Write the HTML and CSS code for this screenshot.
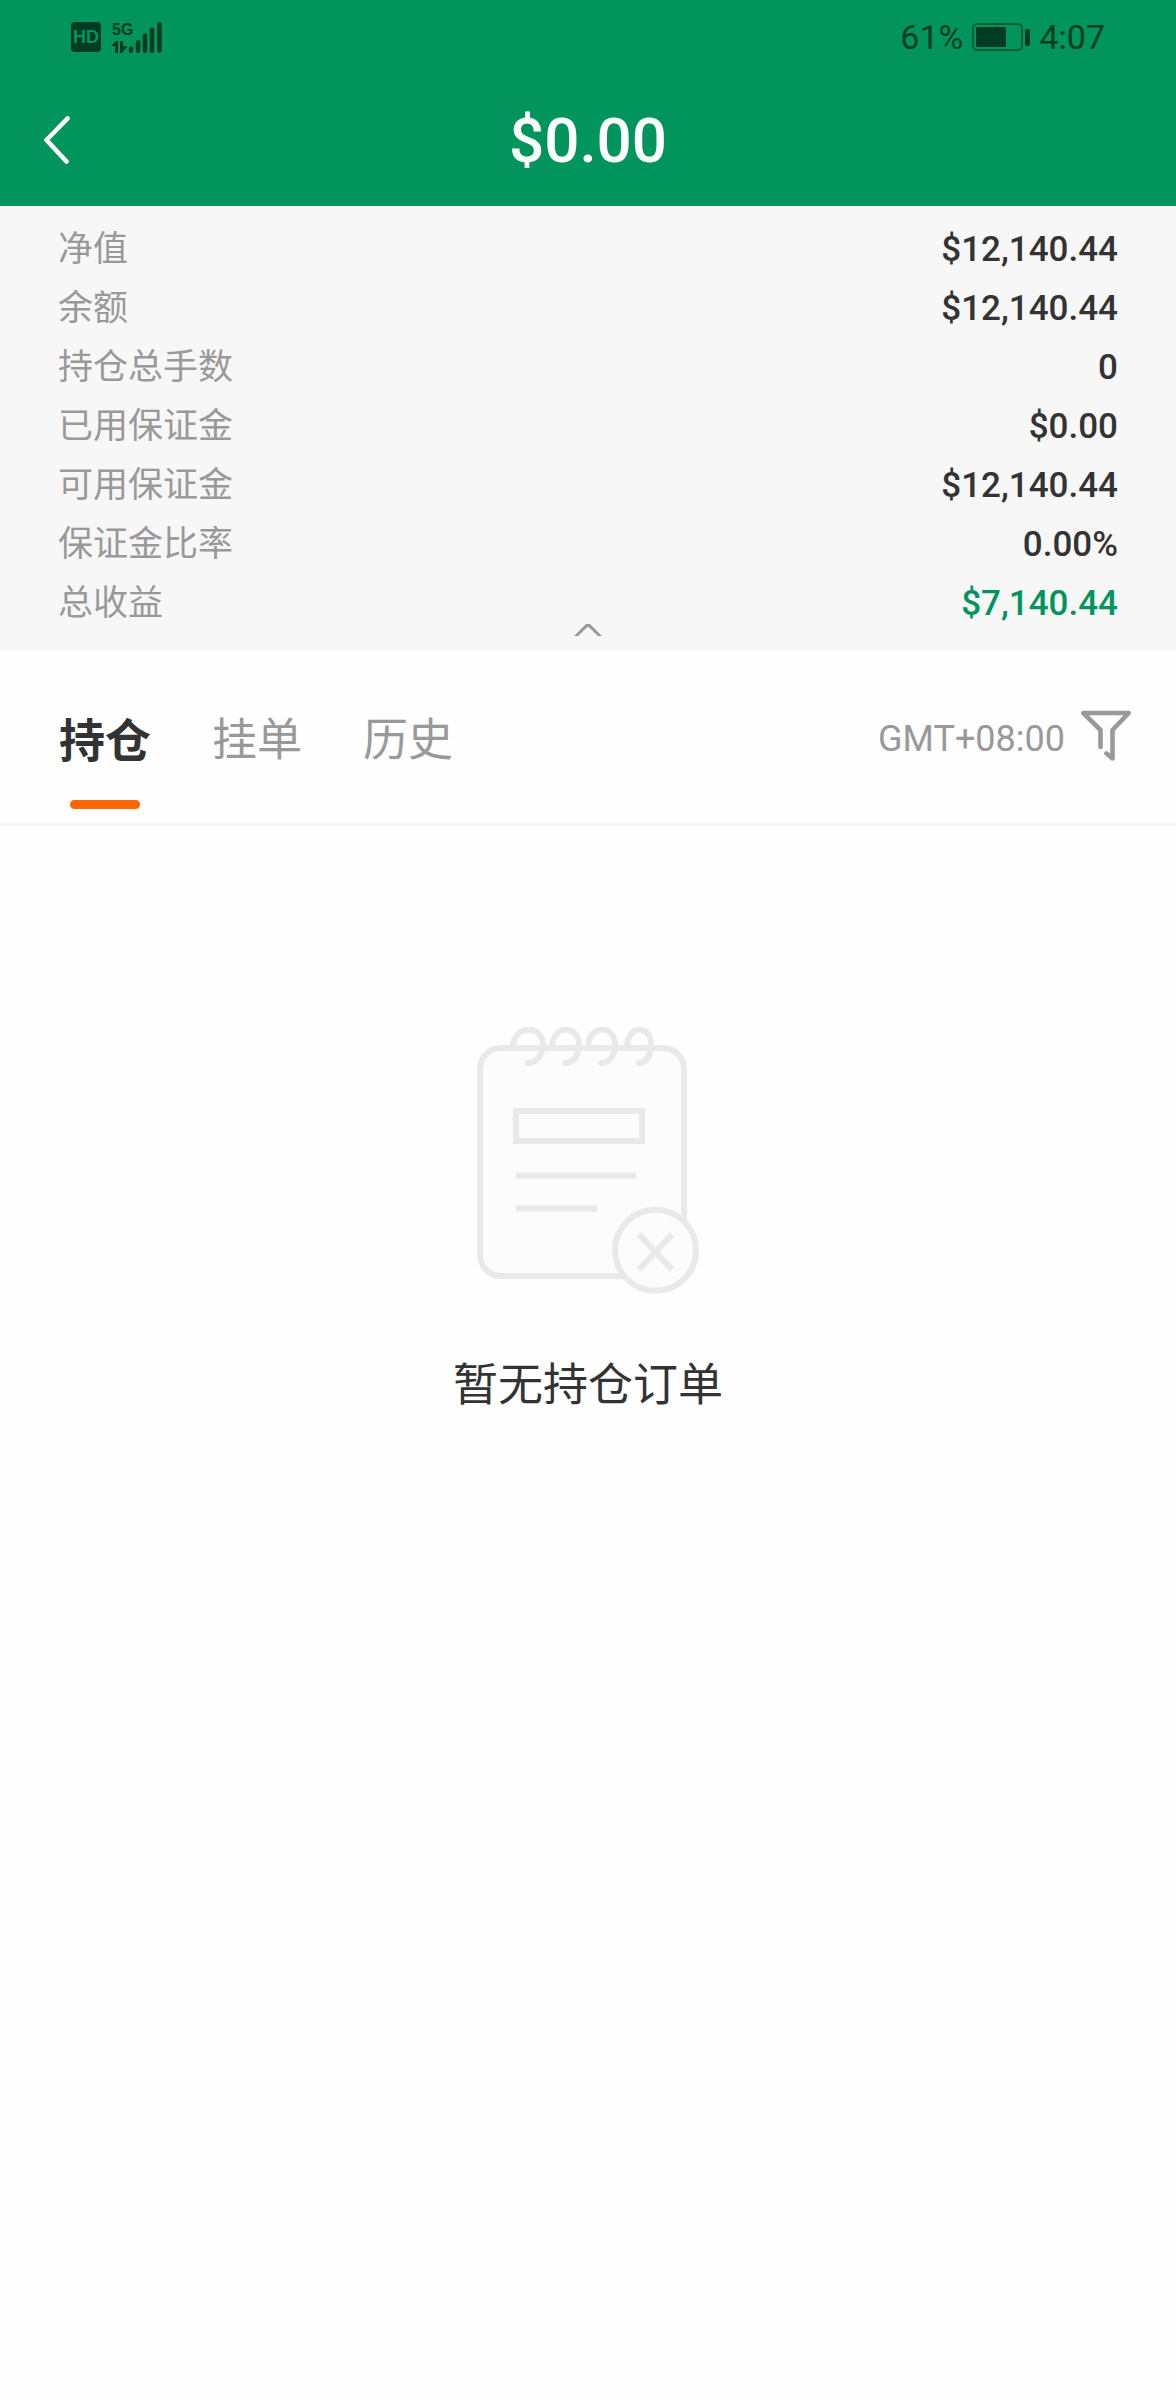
FILE: index.html
```html
<!DOCTYPE html>
<html lang="zh-CN">
<head>
<meta charset="utf-8">
<meta name="viewport" content="width=device-width, initial-scale=1">
<title>持仓</title>
<link rel="stylesheet" href="styles.css">
</head>
<body>
<div class="top">
  <div class="status">
    <div class="status-group">
      <span class="hd">HD</span>
      <svg class="signal" viewBox="0 -8 50 48" width="50" height="48" aria-label="5G">
        <text class="signal-text" x="0" y="14">5G</text>
        <path d="M6 20v12H3v-7H0v-1l4-4zM8 20h3v5h4v1l-5 6H8z"/>
        <path class="bars" d="M19 27.500v2.200M26 21.500v8.200M33 14.500v15.200M40 8.500v21.200M47.500 3.200v26.500"/>
      </svg>
    </div>
    <div class="status-group right">
      <span>61%</span>
      <svg viewBox="0 0 58 28" width="58" height="28" aria-hidden="true">
        <rect x="1" y="1" width="49" height="26" rx="4" fill="none" stroke="#005d38" stroke-width="2"/>
        <rect x="4" y="4" width="30" height="20" rx="1"/>
        <rect x="53" y="6" width="5" height="17" rx="2"/>
      </svg>
      <span>4:07</span>
    </div>
  </div>
  <header class="header">
    <button class="back" type="button" aria-label="返回">
      <svg viewBox="0 0 26 48" width="26" height="48"><path d="M23.500 2.500 2.500 24l20 21.500" fill="none" stroke="#fff" stroke-width="4.600" stroke-linecap="round" stroke-linejoin="round"/></svg>
    </button>
    <h1 class="title">$0.00</h1>
  </header>
</div>
<section class="summary">
  <dl class="rows">
    <div class="row"><dt>净值</dt><dd>$12,140.44</dd></div>
    <div class="row"><dt>余额</dt><dd>$12,140.44</dd></div>
    <div class="row"><dt>持仓总手数</dt><dd>0</dd></div>
    <div class="row"><dt>已用保证金</dt><dd>$0.00</dd></div>
    <div class="row"><dt>可用保证金</dt><dd>$12,140.44</dd></div>
    <div class="row"><dt>保证金比率</dt><dd>0.00%</dd></div>
    <div class="row"><dt>总收益</dt><dd class="gain">$7,140.44</dd></div>
  </dl>
  <button class="collapse" type="button" aria-label="收起">
    <svg viewBox="0 0 28 12" width="28" height="12"><path d="M0 12 12 0h4l12 12h-4L14 2.500 4 12z" fill="#999"/></svg>
  </button>
</section>
<nav class="tabbar">
  <div class="tabs">
    <button class="tab active" type="button">持仓</button>
    <button class="tab" type="button">挂单</button>
    <button class="tab" type="button">历史</button>
  </div>
  <div class="tools">
    <span class="zone">GMT+08:00</span>
    <button class="filter" type="button" aria-label="筛选">
      <svg viewBox="0 0 50 52" width="50" height="52"><path d="M19.500 37V20L2.300 3h45.400L31.500 20v28.500l-6-5" fill="none" stroke="#999" stroke-width="4.600" stroke-linecap="round" stroke-linejoin="round"/></svg>
    </button>
  </div>
</nav>
<main class="empty">
  <svg viewBox="111 81 666 801" width="222" height="267" fill="#fcfcfc" stroke="#e9e9e9" stroke-width="18" aria-hidden="true">
    <rect x="120" y="144" width="612" height="684" rx="62"/>
    <g fill="none">
      <path d="M219 144C219 72 309 72 309 135 309 162 290 189 264 189M336 144C336 72 417 72 417 135 417 162 402 189 376 189M444 144C444 72 525 72 525 135 525 162 510 189 484 189M561 144C561 72 633 72 633 135 633 162 622 189 597 189" stroke-linecap="round"/>
      <rect x="228" y="333" width="378" height="90"/>
      <path d="M228 526.500h360M228 625.500h243"/>
    </g>
    <circle cx="646.500" cy="751" r="121.500"/>
    <path d="M597 703 696 809M696 703 597 809"/>
  </svg>
  <p class="empty-text">暂无持仓订单</p>
</main>
</body>
</html>
```
FILE: styles.css
```css
* {
  box-sizing: border-box;
  margin: 0;
  padding: 0;
}

body {
  background: #fefefe;
  color: #333;
  font-family: Roboto, "Noto Sans CJK SC", sans-serif;
  font-size: 35px;
}

button {
  border: 0;
  background: none;
  color: inherit;
  font: inherit;
  cursor: pointer;
}

svg {
  display: block;
  flex: none;
}

.top {
  background: #01955d;
}

.status {
  display: flex;
  justify-content: space-between;
  align-items: center;
  height: 74px;
  padding: 0 71px;
  color: #003c23;
  fill: #003c23;
  font-size: 34px;
}

.status-group {
  display: flex;
  align-items: center;
  gap: 11px;
}

.status-group.right {
  gap: 9px;
}

.hd {
  width: 30px;
  height: 30px;
  border-radius: 4px;
  background: #003c23;
  color: #01955d;
  font: bold 18px/30px "Liberation Sans", sans-serif;
  text-align: center;
}

.signal-text {
  font: bold 16px "Liberation Sans Narrow", "Liberation Sans", sans-serif;
}

.bars {
  fill: none;
  stroke: #003c23;
  stroke-width: 4.5px;
  stroke-linecap: round;
}

.header {
  display: grid;
  grid-template-columns: 1fr auto 1fr;
  align-items: center;
  height: 132px;
  padding: 0 44px;
  color: #fff;
}

.back {
  justify-self: start;
}

.title {
  padding-top: 2px;
  font-size: 62px;
  font-weight: 500;
  line-height: 72px;
}

.summary {
  position: relative;
  padding: 14px 58px 17px;
  background: #f7f7f7;
}

.row {
  display: flex;
  justify-content: space-between;
  line-height: 59px;
}

.row dt {
  color: #999;
}

.row dd {
  font-weight: 500;
}

.row .gain {
  color: #01955d;
}

.collapse {
  position: absolute;
  bottom: 0;
  left: 50%;
  padding: 14px;
  transform: translateX(-50%);
}

.tabbar {
  display: flex;
  justify-content: space-between;
  height: 176px;
  padding: 0 45px 0 59px;
  border-bottom: 3px solid #f4f4f4;
}

.tabs {
  display: flex;
  gap: 61px;
}

.tab {
  position: relative;
  color: #999;
  font-size: 45px;
}

.tab.active {
  color: #333;
  font-size: 46px;
  font-weight: bold;
}

.tab.active::after {
  content: "";
  position: absolute;
  bottom: 14px;
  left: 11px;
  right: 11px;
  height: 9px;
  border-radius: 5px;
  background: #ff6600;
}

.tools {
  display: flex;
  align-items: center;
  gap: 16px;
  padding-top: 4px;
  color: #999;
}

.zone {
  font-size: 36px;
}

.filter {
  padding-bottom: 6px;
}

.empty {
  display: flex;
  flex-direction: column;
  align-items: center;
  gap: 62px;
  padding: 201px 24px 60px;
}

.empty-text {
  font-size: 45px;
  line-height: 60px;
}
```
